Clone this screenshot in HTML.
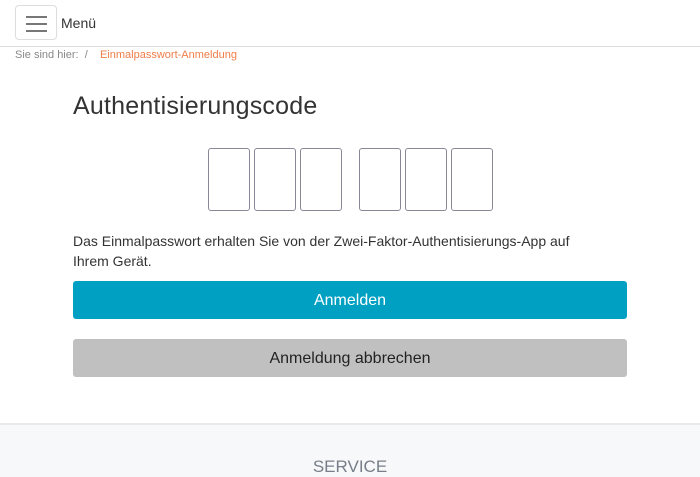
<!DOCTYPE html>
<html><head><meta charset="utf-8"><style>
*{box-sizing:border-box;margin:0;padding:0}
body{width:700px;height:477px;overflow:hidden;background:#fff;font-family:"Liberation Sans",sans-serif;color:#333;position:relative}
.abs{position:absolute}
.menubtn{left:15px;top:5px;width:42px;height:35px;border:1px solid #ddd;border-radius:4px}
.menubtn i{position:absolute;left:10px;width:21px;height:2px;background:#777}
.box{top:148px;width:42px;height:63px;border:1px solid #8a8796;border-radius:3px}
.btn{left:73px;width:554px;height:38px;border-radius:3px;text-align:center;line-height:38px;font-size:16px}
</style></head><body>
<div class="abs menubtn"><i style="top:10px"></i><i style="top:17px"></i><i style="top:24px"></i></div>
<div class="abs" style="left:61px;top:15px;font-size:14px;color:#333">Menü</div>
<div class="abs" style="left:0;top:46px;width:700px;height:1px;background:#ddd"></div>
<div class="abs" style="left:15px;top:49px;font-size:11px;color:#888">Sie sind hier: &nbsp;/&nbsp; &nbsp;&nbsp;<span style="color:#f07d48">Einmalpasswort-Anmeldung</span></div>
<div class="abs" style="left:73px;top:92px;font-size:25px;color:#333;letter-spacing:0.2px">Authentisierungscode</div>
<div class="abs box" style="left:208px"></div><div class="abs box" style="left:254px"></div><div class="abs box" style="left:300px"></div>
<div class="abs box" style="left:359px"></div><div class="abs box" style="left:405px"></div><div class="abs box" style="left:451px"></div>
<div class="abs" style="left:73px;top:231px;width:560px;font-size:14px;line-height:20px;color:#333">Das Einmalpasswort erhalten Sie von der Zwei-Faktor-Authentisierungs-App auf<br>Ihrem Gerät.</div>
<div class="abs btn" style="top:281px;background:#00a0c3;color:#fff;line-height:40px">Anmelden</div>
<div class="abs btn" style="top:339px;background:#c0c0c0;color:#222;line-height:40px">Anmeldung abbrechen</div>
<div class="abs" style="left:0;top:423px;width:700px;height:54px;background:#f7f8fa;border-top:2px solid #e8e9eb"></div>
<div class="abs" style="left:0;top:457px;width:700px;text-align:center;font-size:17px;color:#777e88">SERVICE</div>
</body></html>
